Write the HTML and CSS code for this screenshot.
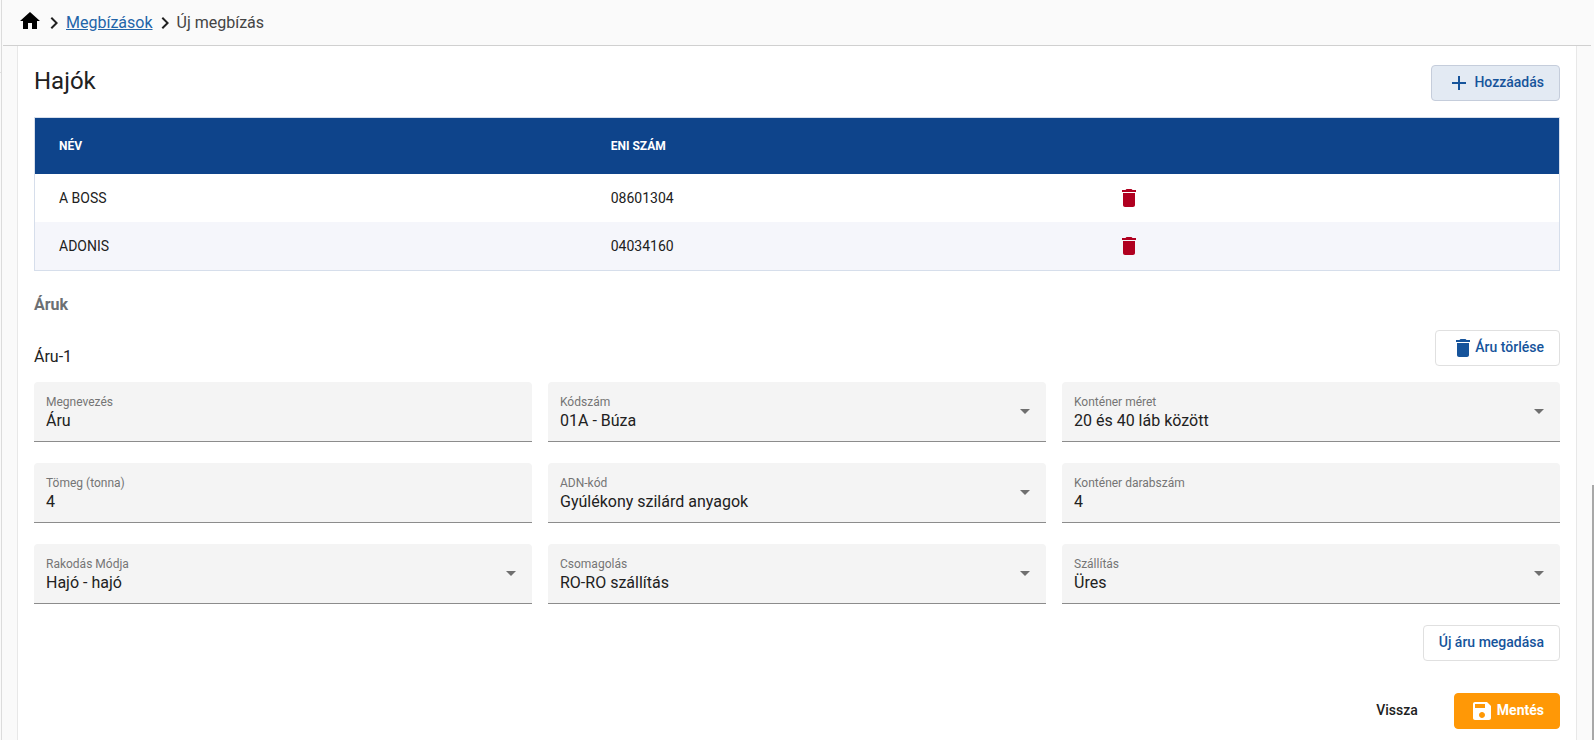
FILE: index.html
```html
<!DOCTYPE html>
<html lang="hu">
<head>
    <meta charset="UTF-8">
    <meta name="viewport" content="width=device-width, initial-scale=1">
    <title>Új megbízás</title>
    <link rel="stylesheet" href="styles.css">
</head>
<body>
    <div class="sidebar"><div class="sidebar-top"></div></div>

    <div class="page">
        <nav class="breadcrumb">
            <a href="#" class="home" aria-label="Főoldal">
                <svg class="icon" viewBox="0 0 24 24"><path d="M10 20v-6h4v6h5v-8h3L12 3 2 12h3v8z"/></svg>
            </a>
            <svg class="icon" viewBox="0 0 24 24"><path d="M10 6L8.59 7.41 13.17 12l-4.58 4.59L10 18l6-6z"/></svg>
            <a href="#" class="link">Megbízások</a>
            <svg class="icon" viewBox="0 0 24 24"><path d="M10 6L8.59 7.41 13.17 12l-4.58 4.59L10 18l6-6z"/></svg>
            <span>Új megbízás</span>
        </nav>

        <main class="card">
            <div class="row">
                <h1>Hajók</h1>
                <button type="button" class="btn btn-add">
                    <svg class="icon" viewBox="0 0 24 24"><path d="M19 13h-6v6h-2v-6H5v-2h6V5h2v6h6v2z"/></svg>
                    <span>Hozzáadás</span>
                </button>
            </div>

            <table class="ships">
                <thead>
                    <tr>
                        <th class="col-name">Név</th>
                        <th class="col-eni">ENI szám</th>
                        <th></th>
                    </tr>
                </thead>
                <tbody>
                    <tr>
                        <td>A BOSS</td>
                        <td>08601304</td>
                        <td>
                            <button type="button" class="delete" aria-label="A BOSS törlése">
                                <svg class="icon" viewBox="0 0 24 24"><path d="M6 19c0 1.100.9 2 2 2h8c1.100 0 2-.9 2-2V7H6v12zM19 4h-3.500l-1-1h-5l-1 1H5v2h14V4z"/></svg>
                            </button>
                        </td>
                    </tr>
                    <tr>
                        <td>ADONIS</td>
                        <td>04034160</td>
                        <td>
                            <button type="button" class="delete" aria-label="ADONIS törlése">
                                <svg class="icon" viewBox="0 0 24 24"><path d="M6 19c0 1.100.9 2 2 2h8c1.100 0 2-.9 2-2V7H6v12zM19 4h-3.500l-1-1h-5l-1 1H5v2h14V4z"/></svg>
                            </button>
                        </td>
                    </tr>
                </tbody>
            </table>

            <h2>Áruk</h2>

            <form id="cargoForm">
                <div class="row row-cargo">
                    <h3>Áru-1</h3>
                    <button type="button" class="btn btn-remove">
                        <svg class="icon" viewBox="0 0 24 24"><path d="M6 19c0 1.100.9 2 2 2h8c1.100 0 2-.9 2-2V7H6v12zM19 4h-3.500l-1-1h-5l-1 1H5v2h14V4z"/></svg>
                        <span>Áru törlése</span>
                    </button>
                </div>

                <div class="fields">
                    <div class="field">
                        <label for="name">Megnevezés</label>
                        <input type="text" id="name" value="Áru">
                    </div>
                    <div class="field">
                        <label for="code">Kódszám</label>
                        <select id="code"><option>01A - Búza</option></select>
                        <span class="arrow"></span>
                    </div>
                    <div class="field">
                        <label for="size">Konténer méret</label>
                        <select id="size"><option>20 és 40 láb között</option></select>
                        <span class="arrow"></span>
                    </div>
                    <div class="field">
                        <label for="weight">Tömeg (tonna)</label>
                        <input type="text" id="weight" value="4">
                    </div>
                    <div class="field">
                        <label for="adn">ADN-kód</label>
                        <select id="adn"><option>Gyúlékony szilárd anyagok</option></select>
                        <span class="arrow"></span>
                    </div>
                    <div class="field">
                        <label for="count">Konténer darabszám</label>
                        <input type="text" id="count" value="4">
                    </div>
                    <div class="field">
                        <label for="loading">Rakodás Módja</label>
                        <select id="loading"><option>Hajó - hajó</option></select>
                        <span class="arrow"></span>
                    </div>
                    <div class="field">
                        <label for="packing">Csomagolás</label>
                        <select id="packing"><option>RO-RO szállítás</option></select>
                        <span class="arrow"></span>
                    </div>
                    <div class="field">
                        <label for="transport">Szállítás</label>
                        <select id="transport"><option>Üres</option></select>
                        <span class="arrow"></span>
                    </div>
                </div>

                <div class="actions">
                    <button type="button" class="btn"><span>Új áru megadása</span></button>
                </div>
                <div class="actions actions-main">
                    <button type="button" class="btn btn-back"><span>Vissza</span></button>
                    <button type="submit" class="btn btn-save">
                        <svg class="icon" viewBox="0 0 24 24"><path d="M17 3H5c-1.110 0-2 .9-2 2v14c0 1.100.89 2 2 2h14c1.100 0 2-.9 2-2V7l-4-4zm-5 16c-1.660 0-3-1.340-3-3s1.340-3 3-3 3 1.340 3 3-1.340 3-3 3zm3-10H5V5h10v4z"/></svg>
                        <span>Mentés</span>
                    </button>
                </div>
            </form>
        </main>
    </div>

    <div class="scroll"><div class="thumb"></div></div>
</body>
</html>
```

FILE: styles.css
```css
* { box-sizing: border-box; }
body { margin: 0; display: flex; min-height: 100vh; background: #fafafa;
       font-family: Roboto, "Liberation Sans", sans-serif; font-size: 16px; color: #212121; }
h1, h2, h3 { margin: 0; font-weight: 400; }
button, input, select { font-family: inherit; }
.icon { width: 24px; height: 24px; fill: currentColor; flex: none; display: block; }

.sidebar { width: 2px; margin-right: 1px; border-right: 1px solid #dcdcdc; }
.sidebar-top { height: 73px; border-bottom: 1px solid #e0e0e0; }

.page { flex: 1; min-width: 0; display: flex; flex-direction: column; }

.breadcrumb { display: flex; align-items: center; height: 46px; padding: 0 15px;
              border-bottom: 1px solid #d0d0d0; color: #444; }
.breadcrumb .icon { color: #212121; }
.breadcrumb .home .icon { color: #000; margin-bottom: 3px; }
.breadcrumb .link { color: #2264a8; text-decoration: underline; }

.card { flex: 1; margin: 0 14px; padding: 19px 16px 11px; background: #fff;
        border: 1px solid #e8e8e8; border-width: 0 1px; }

.row { display: flex; justify-content: space-between; margin-bottom: 16px; }
.row-cargo { align-items: flex-end; }
h1 { font-size: 24px; line-height: 32px; }
h2 { margin: 22px 0 13px; font-size: 16px; line-height: 24px; font-weight: 700; color: #6c6f73; }
h3 { font-size: 16px; line-height: 18px; }

.btn { display: flex; align-items: center; height: 36px; padding: 0 15px; background: #fff;
       border: 1px solid #e0e0e0; border-radius: 4px; color: #16549b;
       font-size: 14px; font-weight: 500; cursor: pointer; }
.btn span { padding-bottom: 2px; }
.btn-add { gap: 3px; background: #e3eaf3; border-color: #c5cddb; }
.btn-back { border-color: transparent; color: #212121; }
.btn-save { gap: 3px; background: #ff9806; border-color: #ff9806; color: #fff; font-weight: 700; }

.ships { width: 100%; table-layout: fixed; border: 1px solid #d6deeb; border-spacing: 0; }
.ships th { height: 56px; padding: 0 0 0 24px; background: #0e448b; color: #fff;
            font-size: 12px; font-weight: 700; text-align: left; text-transform: uppercase; }
.ships td { height: 48px; padding: 0 0 0 24px; font-size: 14px; }
.ships tbody tr:nth-child(even) { background: #f5f6fb; }
.col-name { width: 36.2%; }
.col-eni { width: 33.2%; }
.delete { display: block; padding: 0; border: none; background: none; color: #b00020; cursor: pointer; }

.fields { display: grid; grid-template-columns: repeat(3, 1fr); gap: 21px 16px; }

/* label, control and arrow share one cell */
.field { display: grid; }
.field > * { grid-area: 1 / 1; }
.field label { z-index: 1; align-self: start; justify-self: start; padding: 12px 12px 0;
               font-size: 12px; line-height: 16px; color: #757575; }
.field input, .field select { width: 100%; height: 60px; padding: 18px 12px 0; margin: 0;
               appearance: none; background: #f4f4f4; border: none; border-bottom: 1px solid #8c8c8c;
               border-radius: 4px 4px 0 0; font-size: 16px; color: #212121; outline: none; }
.arrow { align-self: center; justify-self: end; margin: 0 16px 2px 0; pointer-events: none;
         border: 5px solid transparent; border-top-color: #6f6f6f; border-bottom: none; }

.actions { display: flex; justify-content: flex-end; gap: 20px; margin-top: 21px; }
.actions-main { margin-top: 32px; }

.scroll { width: 2px; margin-left: 1px; display: flex; align-items: flex-end; }
.thumb { width: 100%; height: 255px; background: #a8a8a8; }
```
